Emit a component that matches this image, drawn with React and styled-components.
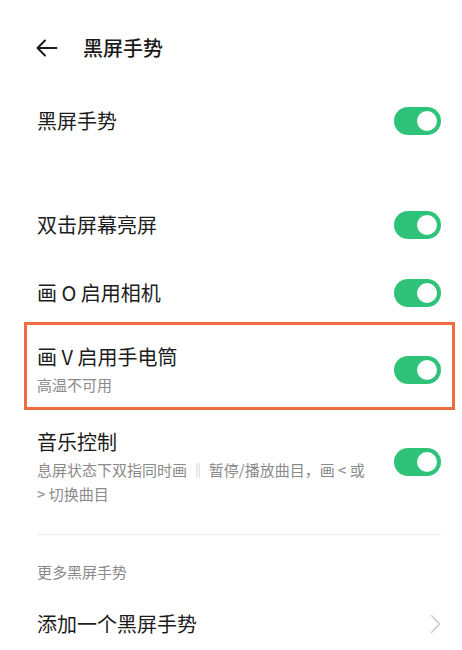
import React from "react";
import styled, { createGlobalStyle } from "styled-components";

const Global = createGlobalStyle`
  html, body { margin: 0; padding: 0; background: #ffffff; }
  body { font-family: "Noto Sans CJK SC", "Noto Sans", sans-serif; color: #1c1c1c; }
`;

const Page = styled.div`
  width: 462px;
  height: 650px;
  overflow: hidden;
  box-sizing: border-box;
  padding: 0 21px 0 37px;
  background: #fff;
`;

const Header = styled.div`
  height: 96px;
  display: flex;
  align-items: center;
  gap: 25px;
  margin-left: -2px;
`;

const HeaderTitle = styled.div`
  font-size: 20px;
  font-weight: 500;
  line-height: 28px;
  color: #1a1a1a;
`;

const Row = styled.div`
  display: flex;
  align-items: center;
  justify-content: space-between;
  gap: 17px;
  box-sizing: border-box;
  height: ${(p) => (p.$h ? `${p.$h}px` : "auto")};
  padding: ${(p) => p.$pad || "0"};
  margin-top: ${(p) => (p.$mt ? `${p.$mt}px` : "0")};
`;

const Highlight = styled.div`
  margin: 0 -14px 0 -13px;
  border: 3px solid #ee6c3f;
  padding: 18px 11px 10px 10px;
`;

const TextCol = styled.div`
  flex: 1;
  min-width: 0;
  display: flex;
  flex-direction: column;
  gap: 2px;
`;

const Title = styled.div`
  font-size: 20px;
  line-height: 28px;
  color: #1c1c1c;
`;

const Sub = styled.div`
  font-size: 15px;
  line-height: 24px;
  color: #8a8a8a;
`;

const Bar = styled.span`
  color: #c4c4c4;
`;

const Track = styled.div`
  flex: none;
  width: 47px;
  height: 28px;
  border-radius: 14px;
  background: #2fc37a;
  position: relative;
  align-self: ${(p) => (p.$shift ? "flex-start" : "center")};
  margin-top: ${(p) => (p.$shift ? `${p.$shift}px` : "0")};
`;

const Knob = styled.div`
  position: absolute;
  top: 4px;
  right: 4px;
  width: 20px;
  height: 20px;
  border-radius: 50%;
  background: #ffffff;
`;

const Divider = styled.div`
  height: 1px;
  background: #ececec;
`;

const SectionLabel = styled.div`
  font-size: 15px;
  line-height: 24px;
  color: #8a8a8a;
  padding: 25px 0 26px;
`;

const Toggle = ({ shift }) => (
  <Track $shift={shift}>
    <Knob />
  </Track>
);

const BackArrow = () => (
  <svg width="23" height="18" viewBox="0 0 23 18" fill="none">
    <path
      d="M21.5 9H2.5M10 1.5L2.5 9L10 16.5"
      stroke="#1c1c1c"
      strokeWidth="2"
      strokeLinecap="round"
      strokeLinejoin="round"
    />
  </svg>
);

const Chevron = () => (
  <svg width="11" height="20" viewBox="0 0 11 20" fill="none">
    <path
      d="M1.5 1.5L9.5 10L1.5 18.5"
      stroke="#c9c9c9"
      strokeWidth="1.6"
      strokeLinecap="round"
      strokeLinejoin="round"
    />
  </svg>
);

export default function App() {
  return (
    <>
      <Global />
      <Page>
        <Header>
          <BackArrow />
          <HeaderTitle>黑屏手势</HeaderTitle>
        </Header>

        <Row $h={50}>
          <Title>黑屏手势</Title>
          <Toggle />
        </Row>

        <Row $h={68} $mt={45}>
          <Title>双击屏幕亮屏</Title>
          <Toggle />
        </Row>

        <Row $h={63} $pad="5px 0 0">
          <Title>画 O 启用相机</Title>
          <Toggle />
        </Row>

        <Highlight>
          <Row>
            <TextCol>
              <Title>画 V 启用手电筒</Title>
              <Sub>高温不可用</Sub>
            </TextCol>
            <Toggle />
          </Row>
        </Highlight>

        <Row $pad="18px 0 28px">
          <TextCol>
            <Title>音乐控制</Title>
            <Sub>
              息屏状态下双指同时画 <Bar>‖</Bar> 暂停/播放曲目，画 &lt; 或{" "}
              &gt;&nbsp;切换曲目
            </Sub>
          </TextCol>
          <Toggle shift={20} />
        </Row>

        <Divider />

        <SectionLabel>更多黑屏手势</SectionLabel>

        <Row>
          <Title>添加一个黑屏手势</Title>
          <Chevron />
        </Row>
      </Page>
    </>
  );
}
